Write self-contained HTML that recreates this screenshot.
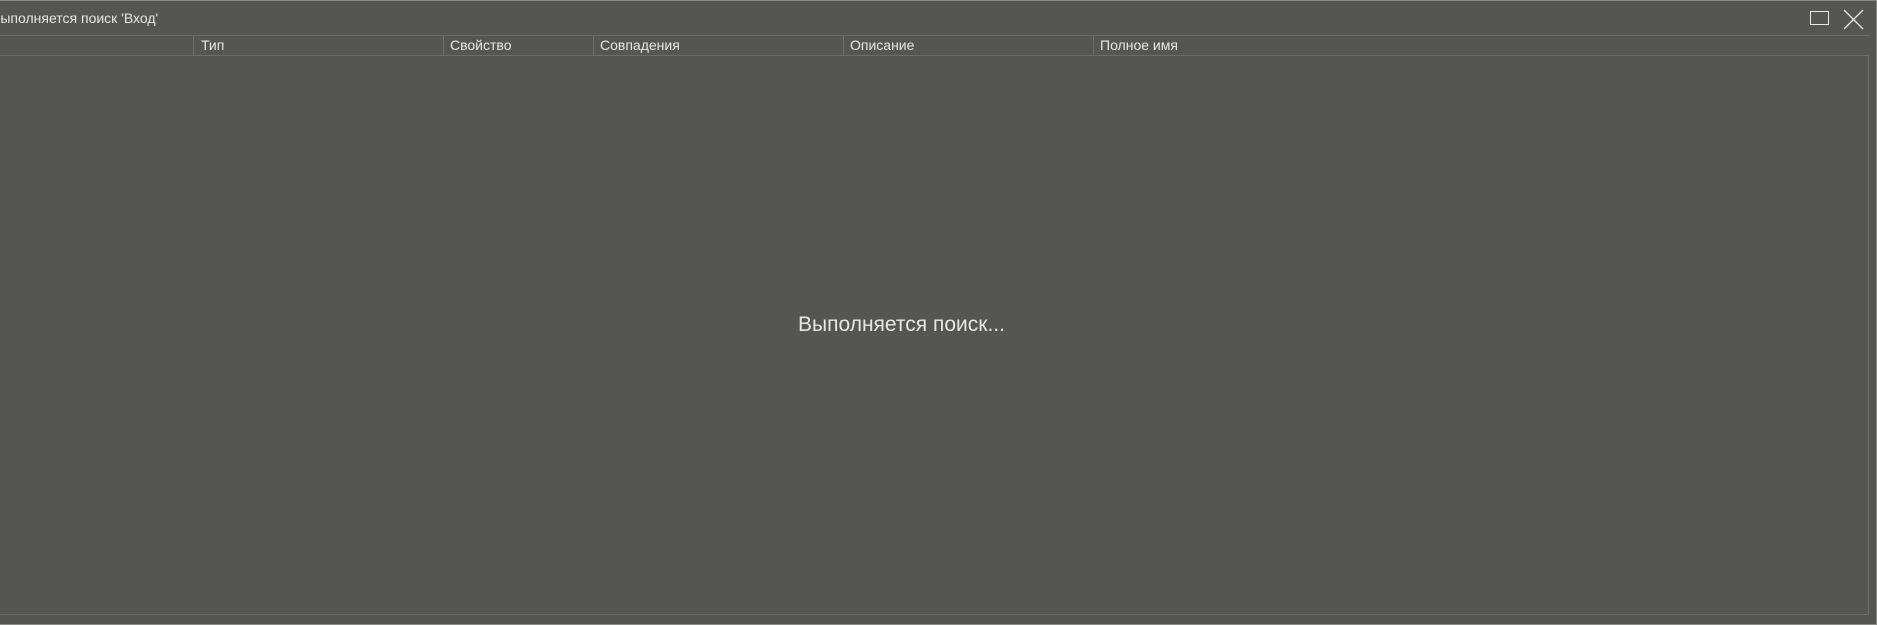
<!DOCTYPE html>
<html><head><meta charset="utf-8"><style>
html,body{margin:0;padding:0;}
body{width:1877px;height:625px;background:#555553;position:relative;overflow:hidden;font-family:"Segoe UI","Liberation Sans","DejaVu Sans",sans-serif;color:#e6e6e6;}
.b{position:absolute;}
.t{position:absolute;white-space:nowrap;font-size:14px;}
.sep{position:absolute;top:35px;width:1px;height:20px;background:#6c6c6a;}
</style></head><body>
<div class="b" style="left:0;top:0;width:1877px;height:1px;background:#8a8a88"></div>
<div class="b" style="right:0;top:0;width:1px;height:625px;background:#8a8a88"></div>
<div class="b" style="left:0;bottom:0;width:1877px;height:1px;background:#8a8a88"></div>
<div class="t" style="left:-9px;top:10px;">Выполняется поиск 'Вход'</div>
<svg class="b" style="left:1809px;top:9px" width="60" height="22">
<rect x="1.5" y="2.5" width="18" height="13" fill="none" stroke="#e8e8e8" stroke-width="1"/>
<path d="M35 1 L54 20 M54 1 L35 20" stroke="#e8e8e8" stroke-width="1.3" fill="none"/>
</svg>
<div class="b" style="left:0;top:35px;width:1870px;height:1px;background:#6c6c6a"></div>
<div class="b" style="left:0;top:55px;width:1869px;height:560px;border-top:1px solid #6c6c6a;border-right:1px solid #6c6c6a;border-bottom:1px solid #6c6c6a;box-sizing:border-box"></div>
<div class="sep" style="left:193px"></div>
<div class="sep" style="left:443px"></div>
<div class="sep" style="left:593px"></div>
<div class="sep" style="left:843px"></div>
<div class="sep" style="left:1093px"></div>
<div class="t" style="left:201px;top:37px;">Тип</div>
<div class="t" style="left:450px;top:37px;">Свойство</div>
<div class="t" style="left:600px;top:37px;">Совпадения</div>
<div class="t" style="left:850px;top:37px;">Описание</div>
<div class="t" style="left:1100px;top:37px;">Полное имя</div>
<div class="t" style="left:798px;top:313px;font-size:21px;">Выполняется поиск...</div>
</body></html>
